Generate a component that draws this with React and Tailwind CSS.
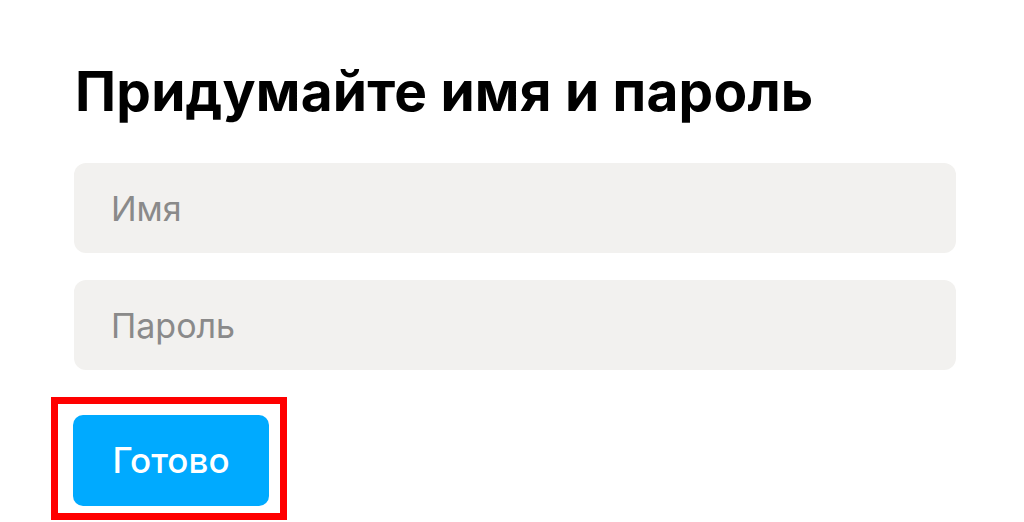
import React from "react";

export default function App() {
  return (
    <div className="w-full h-[522px] bg-white overflow-hidden font-['Inter',sans-serif]">
      <div className="w-[882px] ml-[74px] pt-[64px]">
        {/* Заголовок */}
        <h1 className="ml-[1px] text-[55px] leading-none font-bold text-black tracking-[0.2px]">
          Придумайте имя и пароль
        </h1>

        {/* Поля */}
        <div className="mt-[44px] flex flex-col gap-[27px]">
          <input
            type="text"
            placeholder="Имя"
            className="w-full h-[90px] rounded-[12px] bg-[#f2f1ef] px-[37px] text-[34px] text-[#222] placeholder:text-[#8a8a8a] outline-none"
          />
          <input
            type="password"
            placeholder="Пароль"
            className="w-full h-[90px] rounded-[12px] bg-[#f2f1ef] px-[37px] text-[34px] text-[#222] placeholder:text-[#8a8a8a] outline-none"
          />
        </div>
      </div>

      {/* Кнопка в красной рамке */}
      <div className="mt-[27px] ml-[51px] w-[236px] border-[7px] border-[#ff0000] pl-[15px] pt-[11px] pb-[7px]">
        <button className="w-[196px] h-[91px] rounded-[10px] bg-[#00aaff] text-white text-[35px] font-medium">
          Готово
        </button>
      </div>
    </div>
  );
}
